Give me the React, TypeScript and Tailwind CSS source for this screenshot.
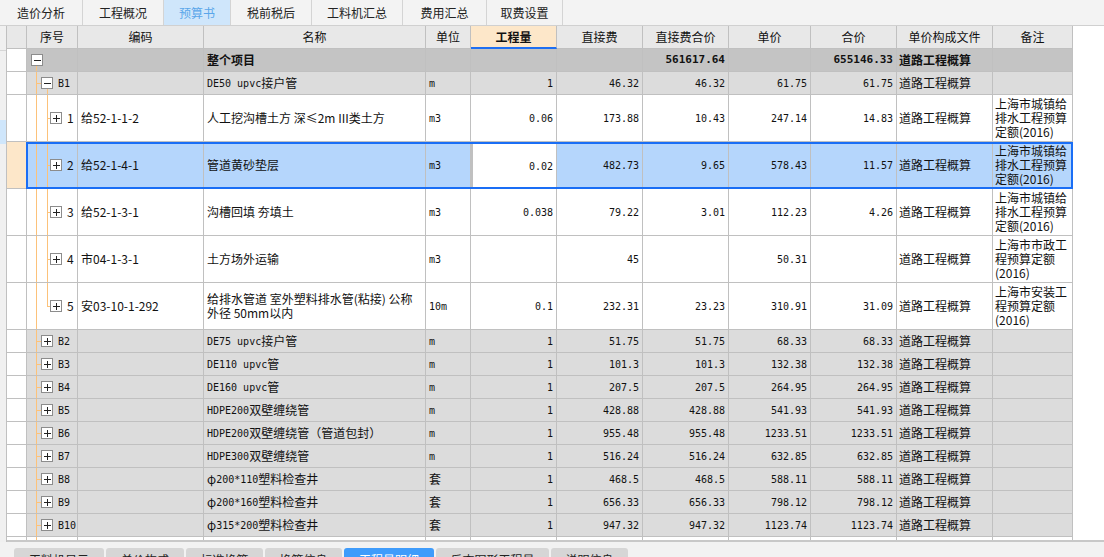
import React from 'react';
import clsx from 'clsx';

const mono = "font-['DejaVu_Sans_Mono',monospace] text-[10px]";
const monoBold = "font-['DejaVu_Sans_Mono',monospace] text-[11px] font-bold";

const W = {
  c0: 'w-[20px]',
  seq: 'w-[51px]',
  code: 'w-[126px]',
  name: 'w-[222px]',
  unit: 'w-[45px]',
  qty: 'w-[86px]',
  df: 'w-[86px]',
  dfh: 'w-[86px]',
  price: 'w-[82px]',
  total: 'w-[86px]',
  file: 'w-[96px]',
  note: 'w-[80px]',
};

const topTabs = [
  { label: '造价分析', w: 'w-[83px]' },
  { label: '工程概况', w: 'w-[81px]' },
  { label: '预算书', w: 'w-[67px]', active: true },
  { label: '税前税后', w: 'w-[81px]' },
  { label: '工料机汇总', w: 'w-[91px]' },
  { label: '费用汇总', w: 'w-[84px]' },
  { label: '取费设置', w: 'w-[76px]' },
];

const bottomTabs = [
  { label: '工料机显示', w: 'w-[90px]' },
  { label: '单价构成', w: 'w-[78px]' },
  { label: '标准换算', w: 'w-[77px]' },
  { label: '换算信息', w: 'w-[77px]' },
  { label: '工程量明细', w: 'w-[90px]', active: true },
  { label: '反查图形工程量', w: 'w-[113px]' },
  { label: '说明信息', w: 'w-[77px]' },
];

type Item = {
  n: string;
  code: string;
  name: string[];
  unit: string;
  qty: string;
  df: string;
  dfh: string;
  price: string;
  total: string;
  note: string[];
  selected?: boolean;
  last?: boolean;
};

const items: Item[] = [
  { n: '1', code: '给52-1-1-2', name: ['人工挖沟槽土方 深≤2m III类土方'], unit: 'm3', qty: '0.06', df: '173.88', dfh: '10.43', price: '247.14', total: '14.83', note: ['上海市城镇给', '排水工程预算', '定额(2016)'] },
  { n: '2', code: '给52-1-4-1', name: ['管道黄砂垫层'], unit: 'm3', qty: '0.02', df: '482.73', dfh: '9.65', price: '578.43', total: '11.57', note: ['上海市城镇给', '排水工程预算', '定额(2016)'], selected: true },
  { n: '3', code: '给52-1-3-1', name: ['沟槽回填 夯填土'], unit: 'm3', qty: '0.038', df: '79.22', dfh: '3.01', price: '112.23', total: '4.26', note: ['上海市城镇给', '排水工程预算', '定额(2016)'] },
  { n: '4', code: '市04-1-3-1', name: ['土方场外运输'], unit: 'm3', qty: '', df: '45', dfh: '', price: '50.31', total: '', note: ['上海市市政工', '程预算定额', '(2016)'] },
  { n: '5', code: '安03-10-1-292', name: ['给排水管道 室外塑料排水管(粘接) 公称', '外径 50mm以内'], unit: '10m', qty: '0.1', df: '232.31', dfh: '23.23', price: '310.91', total: '31.09', note: ['上海市安装工', '程预算定额', '(2016)'], last: true },
];

const groups = [
  ['B2', 'DE75 upvc接户管', 'm', '1', '51.75', '51.75', '68.33', '68.33'],
  ['B3', 'DE110 upvc管', 'm', '1', '101.3', '101.3', '132.38', '132.38'],
  ['B4', 'DE160 upvc管', 'm', '1', '207.5', '207.5', '264.95', '264.95'],
  ['B5', 'HDPE200双壁缠绕管', 'm', '1', '428.88', '428.88', '541.93', '541.93'],
  ['B6', 'HDPE200双壁缠绕管（管道包封）', 'm', '1', '955.48', '955.48', '1233.51', '1233.51'],
  ['B7', 'HDPE300双壁缠绕管', 'm', '1', '516.24', '516.24', '632.85', '632.85'],
  ['B8', 'φ200*110塑料检查井', '套', '1', '468.5', '468.5', '588.11', '588.11'],
  ['B9', 'φ200*160塑料检查井', '套', '1', '656.33', '656.33', '798.12', '798.12'],
  ['B10', 'φ315*200塑料检查井', '套', '1', '947.32', '947.32', '1123.74', '1123.74'],
];

// ascii runs in the songti-like mono face, the rest in the CJK face
function Mixed({ text }: { text: string }) {
  const parts = text.split(/([\x20-\x7E]+)/).filter(Boolean);
  return (
    <>
      {parts.map((p, i) =>
        /^[\x20-\x7E]+$/.test(p) ? (
          <span key={i} className={clsx(mono, 'whitespace-pre')}>{p}</span>
        ) : (
          <span key={i}>{p}</span>
        )
      )}
    </>
  );
}

function Cell({ w, className, children }: { w: string; className?: string; children?: React.ReactNode }) {
  return (
    <div className={clsx('flex shrink-0 items-center overflow-hidden whitespace-nowrap border-r border-b border-[#c0c0c0]', w, className)}>
      {children}
    </div>
  );
}

function Num({ w, v, className, bold }: { w: string; v: string; className?: string; bold?: boolean }) {
  return (
    <Cell w={w} className={clsx('justify-end pr-[3px]', bold ? monoBold : mono, className)}>
      {v}
    </Cell>
  );
}

function Box({ open }: { open?: boolean }) {
  return (
    <span className="relative z-10 flex h-[12px] w-[12px] shrink-0 items-center justify-center border border-[#8c8c8c] bg-white">
      <span className="absolute h-px w-[7px] bg-[#222]" />
      {!open && <span className="absolute h-[7px] w-px bg-[#222]" />}
    </span>
  );
}

const line = 'absolute bg-[#fcc27a]';

function App() {
  return (
    <div className="h-[557px] w-[1104px] overflow-hidden bg-white font-['Noto_Sans_CJK_SC',sans-serif] text-[12px] text-[#111]">
      {/* top tabs */}
      <div className="flex h-[26px] border-b border-[#d0d0d0] bg-[#f3f3f3]">
        {topTabs.map((t) => (
          <div
            key={t.label}
            className={clsx(
              'flex items-center justify-center border-r border-[#d4d4d4] text-[12px]',
              t.w,
              t.active ? 'bg-[#cfe6fb] text-[#5aa6ea]' : 'text-[#222]'
            )}
          >
            {t.label}
          </div>
        ))}
      </div>

      <div className="flex h-[516px]">
        {/* left side strip */}
        <div className="flex w-[7px] shrink-0 flex-col border-r border-[#c0c0c0] bg-[#f0f0f0]">
          <div className="h-[24px]" />
          <div className="h-px bg-[#d6d6d6]" />
          <div className="h-[69px]" />
          <div className="h-[24px] bg-[#cfe6fb]" />
        </div>

        <div className="flex flex-1 flex-col">
          <div className="h-[514px] w-[1066px] overflow-hidden">
            {/* header */}
            <div className="flex h-[23px] bg-[#e8e8e8] text-[12px]">
              <Cell w={W.c0} />
              <Cell w={W.seq} className="justify-center">序号</Cell>
              <Cell w={W.code} className="justify-center">编码</Cell>
              <Cell w={W.name} className="justify-center">名称</Cell>
              <Cell w={W.unit} className="justify-center">单位</Cell>
              <Cell w={W.qty} className="justify-center border-b-2 border-b-[#1f6ff2] bg-[#fde7c9] font-bold">工程量</Cell>
              <Cell w={W.df} className="justify-center">直接费</Cell>
              <Cell w={W.dfh} className="justify-center">直接费合价</Cell>
              <Cell w={W.price} className="justify-center">单价</Cell>
              <Cell w={W.total} className="justify-center">合价</Cell>
              <Cell w={W.file} className="justify-center">单价构成文件</Cell>
              <Cell w={W.note} className="justify-center">备注</Cell>
            </div>

            {/* whole project */}
            <div className="flex h-[23px] bg-[#c4c4c4]">
              <Cell w={W.c0} className="bg-white" />
              <Cell w={W.seq} className="relative pl-[4px]">
                <span className={clsx(line, 'bottom-0 left-[9px] top-1/2 w-px')} />
                <Box open />
              </Cell>
              <Cell w={W.code} />
              <Cell w={W.name} className="pl-[3px] text-[12px] font-bold">整个项目</Cell>
              <Cell w={W.unit} />
              <Cell w={W.qty} />
              <Cell w={W.df} />
              <Num w={W.dfh} v="561617.64" bold />
              <Cell w={W.price} />
              <Num w={W.total} v="655146.33" bold />
              <Cell w={W.file} className="pl-[2px] font-bold">道路工程概算</Cell>
              <Cell w={W.note} />
            </div>

            {/* B1 */}
            <div className="flex h-[23px] bg-[#dcdcdc]">
              <Cell w={W.c0} className="bg-white" />
              <Cell w={W.seq} className="relative pl-[14px]">
                <span className={clsx(line, 'bottom-0 left-[9px] top-0 w-px')} />
                <span className={clsx(line, 'left-[9px] top-1/2 h-px w-[5px]')} />
                <span className={clsx(line, 'bottom-0 left-[20px] top-1/2 w-px')} />
                <Box open />
                <span className={clsx(mono, 'ml-[5px]')}>B1</span>
              </Cell>
              <Cell w={W.code} />
              <Cell w={W.name} className="pl-[3px]"><Mixed text="DE50 upvc接户管" /></Cell>
              <Cell w={W.unit} className={clsx('pl-[3px]', mono)}>m</Cell>
              <Num w={W.qty} v="1" />
              <Num w={W.df} v="46.32" />
              <Num w={W.dfh} v="46.32" />
              <Num w={W.price} v="61.75" />
              <Num w={W.total} v="61.75" />
              <Cell w={W.file} className="pl-[2px]">道路工程概算</Cell>
              <Cell w={W.note} />
            </div>

            {/* items */}
            {items.map((it) => (
              <div key={it.n} className={clsx('relative flex h-[47px]', it.selected ? 'bg-[#b5d6fc]' : 'bg-white')}>
                <Cell w={W.c0} className={it.selected ? 'bg-[#fde7c9]' : 'bg-white'} />
                <Cell w={W.seq} className="relative pl-[23px]">
                  <span className={clsx(line, 'bottom-0 left-[9px] top-0 w-px')} />
                  <span className={clsx(line, 'left-[20px] top-0 w-px', it.last ? 'h-1/2' : 'bottom-0')} />
                  <span className={clsx(line, 'left-[20px] top-1/2 h-px w-[3px]')} />
                  <Box />
                  <span className="ml-[5px]">{it.n}</span>
                </Cell>
                <Cell w={W.code} className="pl-[3px]">{it.code}</Cell>
                <Cell w={W.name} className="pl-[3px]">
                  <div className="flex flex-col leading-[14px]">
                    {it.name.map((l) => (
                      <span key={l} className="whitespace-pre">{l}</span>
                    ))}
                  </div>
                </Cell>
                <Cell w={W.unit} className={clsx('pl-[3px]', mono)}>{it.unit}</Cell>
                <Num w={W.qty} v={it.qty} className={it.selected ? 'border-2 border-[#1a6ef5] bg-white' : ''} />
                <Num w={W.df} v={it.df} />
                <Num w={W.dfh} v={it.dfh} />
                <Num w={W.price} v={it.price} />
                <Num w={W.total} v={it.total} />
                <Cell w={W.file} className="pl-[2px]">道路工程概算</Cell>
                <Cell w={W.note} className="pl-[2px]">
                  <div className="flex flex-col leading-[14px]">
                    {it.note.map((l) => (
                      <span key={l}>{l}</span>
                    ))}
                  </div>
                </Cell>
                {it.selected && (
                  <div className="pointer-events-none absolute bottom-0 left-[19px] top-0 w-[1047px] border-2 border-[#1a6ef5]" />
                )}
              </div>
            ))}

            {/* collapsed groups */}
            {groups.map((g) => (
              <div key={g[0]} className="flex h-[23px] bg-[#dcdcdc]">
                <Cell w={W.c0} className="bg-white" />
                <Cell w={W.seq} className="relative pl-[14px]">
                  <span className={clsx(line, 'bottom-0 left-[9px] top-0 w-px')} />
                  <span className={clsx(line, 'left-[9px] top-1/2 h-px w-[5px]')} />
                  <Box />
                  <span className={clsx(mono, 'ml-[5px]')}>{g[0]}</span>
                </Cell>
                <Cell w={W.code} />
                <Cell w={W.name} className="pl-[3px]"><Mixed text={g[1]} /></Cell>
                <Cell w={W.unit} className="pl-[3px]"><Mixed text={g[2]} /></Cell>
                <Num w={W.qty} v={g[3]} />
                <Num w={W.df} v={g[4]} />
                <Num w={W.dfh} v={g[5]} />
                <Num w={W.price} v={g[6]} />
                <Num w={W.total} v={g[7]} />
                <Cell w={W.file} className="pl-[2px]">道路工程概算</Cell>
                <Cell w={W.note} />
              </div>
            ))}

            {/* next row, cut off */}
            <div className="flex h-[23px] bg-white">
              <Cell w={W.c0} />
              <Cell w={W.seq} className="relative">
                <span className={clsx(line, 'bottom-0 left-[9px] top-0 w-px')} />
              </Cell>
              <Cell w={W.code} />
              <Cell w={W.name} />
              <Cell w={W.unit} />
              <Cell w={W.qty} />
              <Cell w={W.df} />
              <Cell w={W.dfh} />
              <Cell w={W.price} />
              <Cell w={W.total} />
              <Cell w={W.file} />
              <Cell w={W.note} />
            </div>
          </div>
          <div className="h-[2px] bg-[#c8c8c8]" />
        </div>
      </div>

      {/* bottom tabs */}
      <div className="flex h-[15px] items-start gap-[2px] bg-[#f2f2f2] pl-[14px] pt-[6px]">
        {bottomTabs.map((t) => (
          <div
            key={t.label}
            className={clsx(
              'flex h-[24px] shrink-0 justify-center rounded-t-[3px] pt-[3px] text-[12px]',
              t.w,
              t.active ? 'bg-[#3f9cfb] text-white' : 'bg-[#d6d6d6] text-[#222]'
            )}
          >
            {t.label}
          </div>
        ))}
      </div>
    </div>
  );
}

export default App;
